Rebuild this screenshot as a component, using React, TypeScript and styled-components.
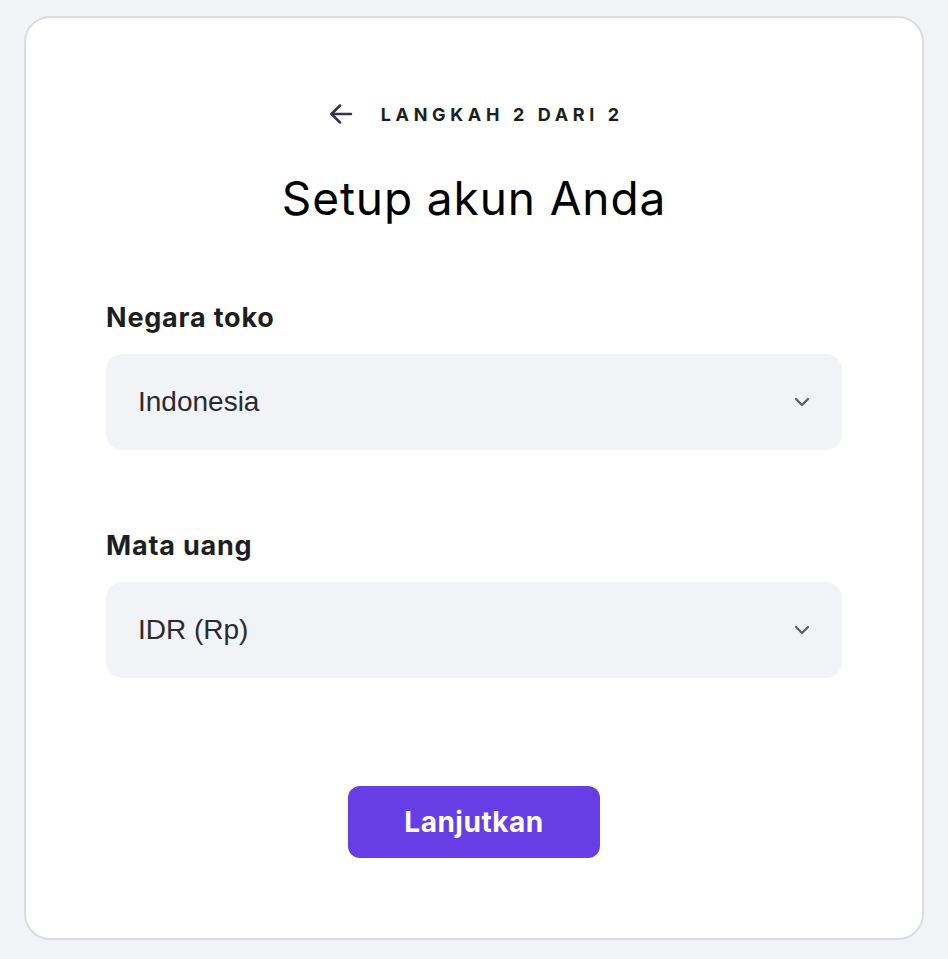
import React from "react";
import styled, { createGlobalStyle } from "styled-components";

const Global = createGlobalStyle`
  html, body { margin: 0; padding: 0; background: #f2f3f6; }
  body { font-family: Inter, "Noto Sans", sans-serif; color: #1d1e20; }
  * { box-sizing: border-box; }
`;

const Page = styled.div`
  padding: 16px 24px 19px;
  min-height: 959px;
`;

const Card = styled.div`
  background: #ffffff;
  border: 2px solid #dadce0;
  border-radius: 26px;
  padding: 84px 80px 80px;
  display: flex;
  flex-direction: column;
`;

const Header = styled.div`
  display: flex;
  align-items: center;
  justify-content: center;
  gap: 28px;
  height: 24px;
`;

const BackButton = styled.button`
  border: none;
  background: none;
  padding: 0;
  display: flex;
  align-items: center;
  color: #36344d;
  cursor: pointer;
`;

const Step = styled.span`
  font-size: 18px;
  font-weight: 700;
  letter-spacing: 4.65px;
  margin-right: -4.65px;
  color: #1d1e20;
  text-transform: uppercase;
`;

const Title = styled.h1`
  margin: 44px 0 0;
  font-size: 46px;
  line-height: 56px;
  letter-spacing: 0.9px;
  font-weight: 400;
  text-align: center;
  color: #000;
`;

const Field = styled.div<{ $top: number }>`
  display: flex;
  flex-direction: column;
  gap: 20px;
  margin-top: ${(p) => p.$top}px;
`;

const Label = styled.label`
  font-size: 27px;
  line-height: 32px;
  letter-spacing: 0.8px;
  font-weight: 700;
  color: #1d1e20;
`;

const Select = styled.div`
  height: 96px;
  border-radius: 16px;
  background: #f2f3f6;
  display: flex;
  align-items: center;
  justify-content: space-between;
  padding: 0 32px 0 32px;
  font-family: "Liberation Sans", Arial, sans-serif;
  font-size: 28px;
  color: #2b2b2f;
`;

const Chevron = styled.svg`
  width: 16px;
  height: 10px;
  color: #5e5e66;
`;

const Actions = styled.div`
  display: flex;
  justify-content: center;
  margin-top: 108px;
`;

const Button = styled.button`
  width: 252px;
  height: 72px;
  border: none;
  border-radius: 12px;
  background: #673de6;
  color: #fff;
  font-family: Inter, "Noto Sans", sans-serif;
  font-size: 28px;
  letter-spacing: 0.5px;
  font-weight: 700;
  cursor: pointer;
`;

const ChevronIcon = () => (
  <Chevron viewBox="0 0 16 10" fill="none" stroke="currentColor" strokeWidth={2.3} strokeLinecap="round" strokeLinejoin="round">
    <path d="M2 2l6 6 6-6" />
  </Chevron>
);

export default function App() {
  return (
    <>
      <Global />
      <Page>
        <Card>
          <Header>
            <BackButton aria-label="Kembali">
              <svg width="24" height="24" viewBox="0 0 24 24" fill="none" stroke="currentColor" strokeWidth={2.5} strokeLinecap="round" strokeLinejoin="round">
                <path d="M22 12H2.5" />
                <path d="M11 3.5l-8.5 8.5 8.5 8.5" />
              </svg>
            </BackButton>
            <Step>Langkah 2 dari 2</Step>
          </Header>
          <Title>Setup akun Anda</Title>
          <Field $top={76}>
            <Label>Negara toko</Label>
            <Select>
              <span>Indonesia</span>
              <ChevronIcon />
            </Select>
          </Field>
          <Field $top={80}>
            <Label>Mata uang</Label>
            <Select>
              <span>IDR (Rp)</span>
              <ChevronIcon />
            </Select>
          </Field>
          <Actions>
            <Button>Lanjutkan</Button>
          </Actions>
        </Card>
      </Page>
    </>
  );
}
